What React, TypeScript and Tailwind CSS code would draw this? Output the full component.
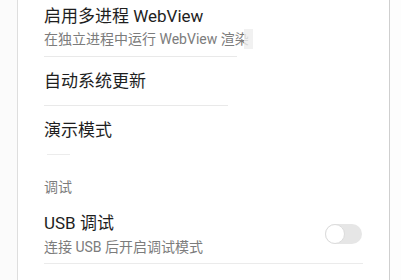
import React from "react";

export default function App() {
  return (
    <div
      className="w-[401px] h-[280px] overflow-hidden bg-white flex"
      style={{ fontFamily: 'Roboto, "Noto Sans CJK SC", sans-serif' }}
    >
      <div className="w-[17px] shrink-0 bg-[#fbfbfb]" />
      <div className="w-px shrink-0 bg-[#dedede]" />
      <div className="w-[371px] shrink-0 pl-[26px] pt-[5px] flex flex-col">
        {/* Item 1 */}
        <div className="text-[17px] leading-[22px] h-[22px] text-[#1e1e1e] whitespace-nowrap">
          启用多进程 WebView
        </div>
        <div className="relative mt-[2px] h-[20px] w-[209px] overflow-hidden whitespace-nowrap text-[14px] leading-[20px] text-[#7c7c7c]">
          在独立进程中运行 WebView 渲染
          <div className="absolute right-0 top-[-4px] h-[26px] w-[9px] bg-[#ededed]/80" />
        </div>
        <div className="mt-[7px] h-px w-[193px] bg-[#e9e9e9]" />

        {/* Item 2 */}
        <div className="mt-[13px] text-[17px] leading-[22px] h-[22px] text-[#1e1e1e]">
          自动系统更新
        </div>
        <div className="mt-[13px] h-px w-[184px] bg-[#e9e9e9]" />

        {/* Item 3 */}
        <div className="mt-[13px] text-[17px] leading-[22px] h-[22px] text-[#1e1e1e]">
          演示模式
        </div>
        <div className="mt-[13px] ml-[3px] h-px w-[23px] bg-[#ececec]" />

        {/* Section header */}
        <div className="mt-[22px] text-[14px] leading-[20px] h-[20px] text-[#7c7c7c]">
          调试
        </div>

        {/* USB item */}
        <div className="mt-[15px] w-[319px] flex items-center">
          <div className="flex-1 flex flex-col">
            <div className="text-[17px] leading-[22px] h-[22px] text-[#1e1e1e]">
              USB 调试
            </div>
            <div className="mt-[3px] text-[14px] leading-[20px] h-[20px] text-[#7c7c7c] whitespace-nowrap">
              连接 USB 后开启调试模式
            </div>
          </div>
          <div className="mr-px mt-[-2px] w-[37px] h-[20px] rounded-full bg-[#e6e6e6] flex items-center">
            <div className="w-[20px] h-[20px] rounded-full bg-white border border-[#dcdcdc]" />
          </div>
        </div>
        <div className="mt-[6px] h-px w-[319px] bg-[#ebebeb]" />
      </div>
      <div className="w-px shrink-0 bg-[#cfcfcf]" />
      <div className="flex-1 bg-[#fdfdfd]" />
    </div>
  );
}
